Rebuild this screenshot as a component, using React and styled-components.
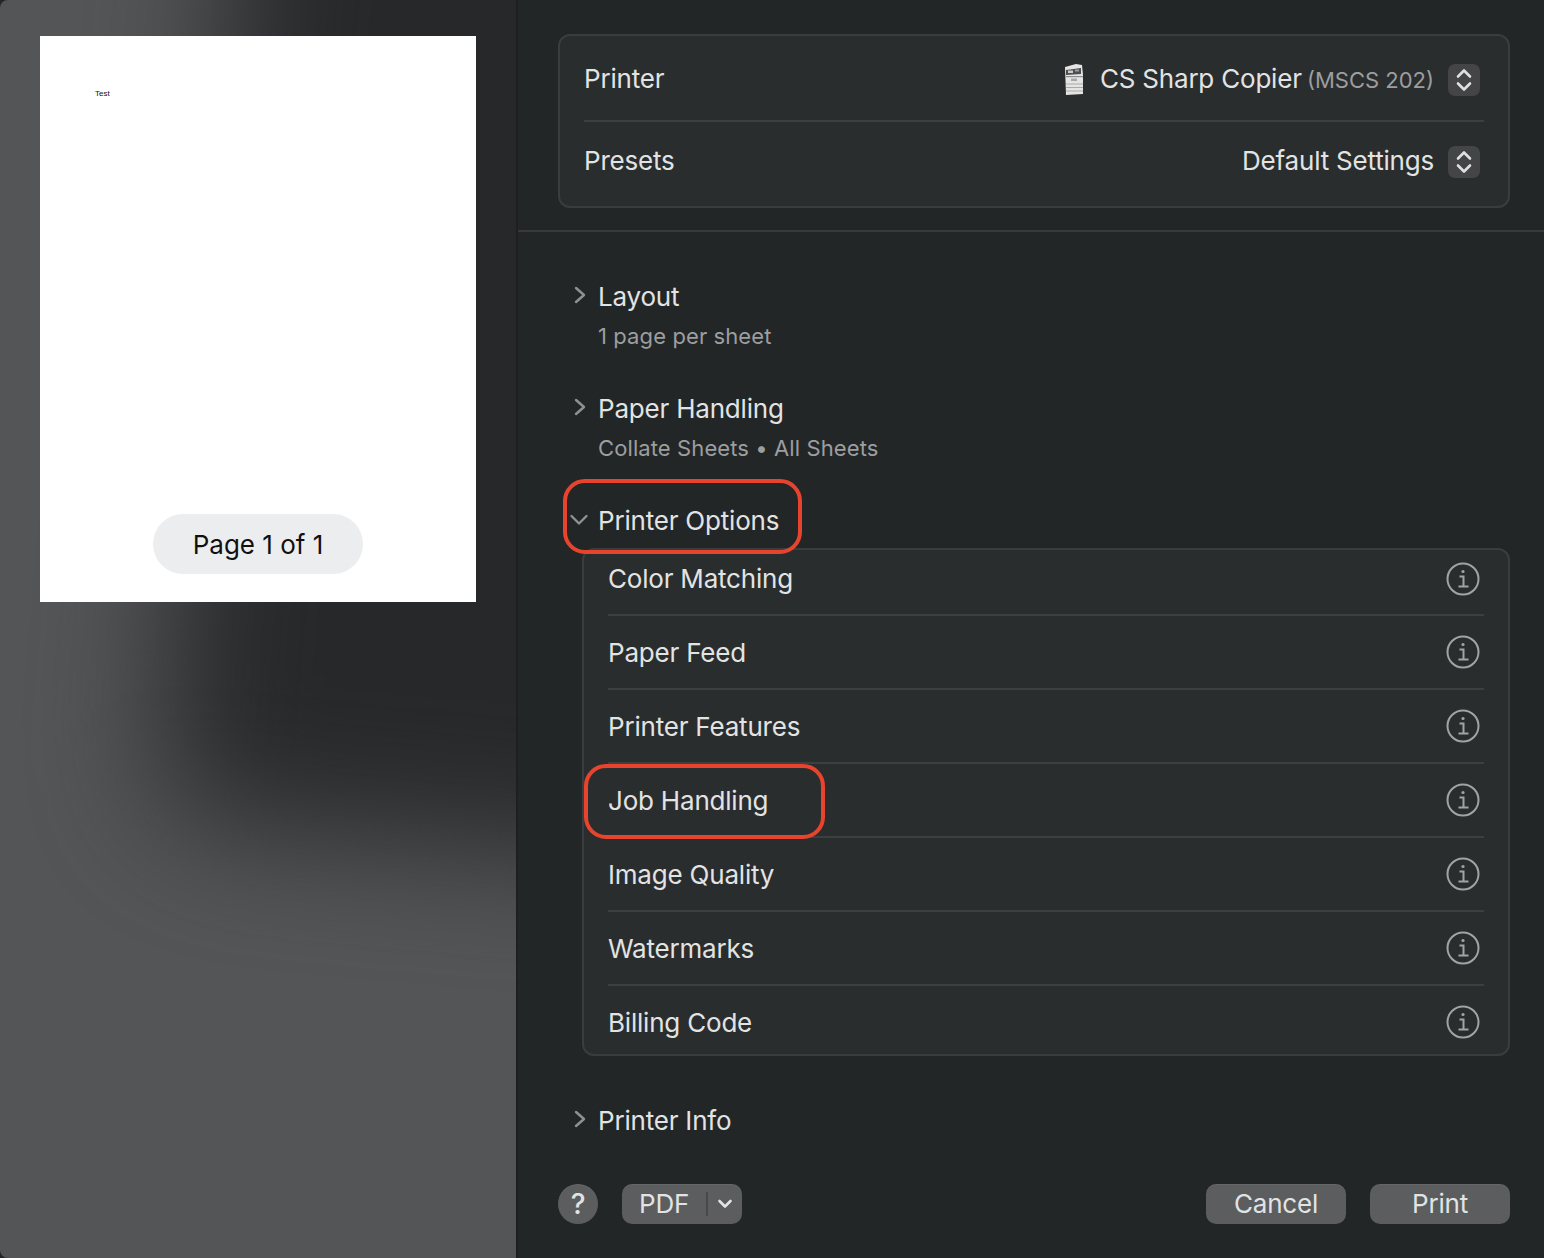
import React from 'react';
import styled, { createGlobalStyle } from 'styled-components';

const Global = createGlobalStyle`
  html, body { margin: 0; padding: 0; background: #232627; }
  body { font-family: Inter, "Liberation Sans", sans-serif; -webkit-font-smoothing: antialiased; }
`;

const Window = styled.div`
  width: 1544px;
  height: 1258px;
  display: flex;
  overflow: hidden;
`;

const Sidebar = styled.aside`
  position: relative;
  width: 516px;
  flex: none;
  box-sizing: border-box;
  padding: 36px 40px 0;
  background: #545557;
  overflow: hidden;
  border-radius: 8px 0 0 8px;
  &::before {
    content: '';
    position: absolute;
    left: 205px;
    top: -300px;
    width: 700px;
    height: 1150px;
    background: #26282a;
    border-radius: 60px;
    filter: blur(65px);
    transform: rotate(5deg);
  }
`;

const Sheet = styled.div`
  position: relative;
  width: 436px;
  height: 566px;
  background: #fff;
  display: flex;
  flex-direction: column;
  align-items: center;
  justify-content: flex-end;
  padding-bottom: 28px;
  box-sizing: border-box;
`;

const SheetText = styled.span`
  position: absolute;
  left: 55px;
  top: 53px;
  font: 8px "Liberation Sans", sans-serif;
  color: #111;
`;

const PagePill = styled.div`
  width: 210px;
  height: 60px;
  border-radius: 30px;
  background: #ecedef;
  color: #111;
  font-size: 26px;
  display: flex;
  align-items: center;
  justify-content: center;
`;

const Main = styled.main`
  flex: 1;
  border-left: 2px solid #1d1f20;
  background: #232627;
  display: flex;
  flex-direction: column;
  color: #e2e3e3;
  font-size: 26px;
  letter-spacing: -0.2px;
`;

const TopArea = styled.div`
  padding: 34px 34px 22px 40px;
  border-bottom: 2px solid #37393b;
`;

const Card = styled.div`
  border: 2px solid #3a3d3f;
  border-radius: 12px;
  background: #2a2d2e;
  box-sizing: border-box;
`;

const PrinterCard = styled(Card)`
  height: 174px;
  padding: 0 24px;
`;

const SetupRow = styled.div`
  height: 84px;
  box-sizing: border-box;
  display: flex;
  align-items: center;
  justify-content: space-between;
  & + & {
    height: 80px;
    padding-bottom: 2px;
    border-top: 2px solid #3d4042;
  }
`;

const SetupValue = styled.div`
  display: flex;
  align-items: center;
`;

const Muted = styled.span`
  color: #9c9e9f;
  font-size: 22px;
  letter-spacing: 0;
  margin-left: -2px;
`;

const Stepper = styled.div`
  width: 32px;
  height: 32px;
  margin: 4px 4px 0 14px;
  border-radius: 7px;
  background: #434547;
  display: flex;
  align-items: center;
  justify-content: center;
`;

const Sections = styled.div`
  flex: 1;
  padding: 44px 34px 0 40px;
  display: flex;
  flex-direction: column;
`;

const Section = styled.div`
  height: 112px;
`;

const Disclosure = styled.div`
  position: relative;
  display: flex;
  align-items: center;
  height: 40px;
  gap: 12px;
  margin-top: ${(p) => p.$gap || 0}px;
`;

const Chevron = styled.svg`
  width: 28px;
  height: 28px;
  flex: none;
  margin-left: 9px;
  margin-right: -9px;
`;

const Subtitle = styled.div`
  margin: 4px 0 0 40px;
  color: #9c9e9f;
  font-size: 22px;
  letter-spacing: 0.1px;
  line-height: 32px;
`;

const Highlight = styled.div`
  position: absolute;
  border: 4px solid #e8432d;
  border-radius: 22px;
  box-sizing: border-box;
  left: ${(p) => p.$left}px;
  top: ${(p) => p.$top}px;
  width: ${(p) => p.$width}px;
  height: 75px;
  pointer-events: none;
`;

const OptionsCard = styled(Card)`
  margin: 8px 0 0 24px;
  height: 508px;
  padding: 0 24px;
`;

const OptionRow = styled.div`
  position: relative;
  height: 74px;
  box-sizing: border-box;
  display: flex;
  align-items: center;
  justify-content: space-between;
  padding-right: 4px;
  border-bottom: 2px solid #3d4042;
  &:first-child {
    height: 66px;
    padding-bottom: 7px;
  }
  &:last-child {
    border-bottom: 0;
    height: 68px;
    padding-top: 4px;
  }
`;

const InfoIcon = styled.svg`
  width: 34px;
  height: 34px;
  flex: none;
`;

const PrinterGlyph = styled.svg`
  width: 20px;
  height: 32px;
  margin: 2px 16px 0 0;
`;

const Footer = styled.div`
  display: flex;
  align-items: center;
  gap: 24px;
  height: 40px;
  margin: 0 34px 34px 40px;
`;

const HelpButton = styled.div`
  width: 40px;
  height: 40px;
  border-radius: 50%;
  background: #5c5d5f;
  display: flex;
  align-items: center;
  justify-content: center;
  font-size: 28px;
  font-weight: 500;
  box-shadow: inset 0 1px 0 rgba(255, 255, 255, 0.06);
`;

const PushButton = styled.div`
  width: ${(p) => p.$width}px;
  height: 40px;
  padding-bottom: 2px;
  border-radius: 10px;
  background: #5c5d5f;
  box-shadow: inset 0 1px 0 rgba(255, 255, 255, 0.06);
  display: flex;
  align-items: center;
  justify-content: center;
  box-sizing: border-box;
`;

const PdfButton = styled(PushButton)`
  justify-content: flex-start;
  padding-left: 17px;
  padding-bottom: 0;
`;

const PdfLabel = styled.span`
  margin-top: -2px;
`;

const PdfDivider = styled.span`
  width: 2px;
  height: 24px;
  background: #474849;
  margin: 0 9px 0 17px;
`;

const Spacer = styled.div`
  flex: 1;
`;

const PrinterIcon = () => (
  <PrinterGlyph viewBox="0 0 20 32">
    <path d="M1 4 L12 1 L18 2 L19 12 L19 31 L2 32 Z" fill="#e4e4e2" />
    <path d="M2 7 L17 5 L17 11 L2 12 Z" fill="#4c4f51" />
    <rect x="4" y="7.5" width="5" height="2.5" fill="#c9caca" />
    <rect x="11" y="6.5" width="4" height="2" fill="#9a9c9d" />
    <rect x="2" y="13" width="17" height="1.2" fill="#8b8d8e" />
    <rect x="7" y="15.5" width="6" height="2.5" fill="#a5a7a8" />
    <path d="M2 21 H19 M2 24.5 H19 M2 28 H19" stroke="#a8aaaa" strokeWidth="1" />
  </PrinterGlyph>
);

const UpDown = () => (
  <svg width="20" height="26" viewBox="0 0 20 26" fill="none" stroke="#dfe0e0" strokeWidth="2.6" strokeLinecap="round" strokeLinejoin="round">
    <path d="M4 9.5 L10 3.5 L16 9.5" />
    <path d="M4 16.5 L10 22.5 L16 16.5" />
  </svg>
);

const Right = () => (
  <Chevron viewBox="0 0 28 28" fill="none" stroke="#8f9192" strokeWidth="2.4" strokeLinecap="round" strokeLinejoin="round">
    <path d="M9 6 L17 13 L9 20" />
  </Chevron>
);

const Down = () => (
  <Chevron viewBox="0 0 28 28" fill="none" stroke="#8f9192" strokeWidth="2.4" strokeLinecap="round" strokeLinejoin="round">
    <path d="M4.5 10 L12 17.5 L19.5 10" />
  </Chevron>
);

const Info = () => (
  <InfoIcon viewBox="0 0 34 34" fill="none" stroke="#a2a4a4" strokeWidth="2">
    <circle cx="17" cy="17" r="15.5" />
    <circle cx="17" cy="9.5" r="1.6" fill="#a2a4a4" stroke="none" />
    <path d="M13.5 14.5 H17.5 V24.5 M12.5 24.5 H22.5" />
  </InfoIcon>
);

const options = ['Color Matching', 'Paper Feed', 'Printer Features', 'Job Handling', 'Image Quality', 'Watermarks', 'Billing Code'];

export default function App() {
  return (
    <Window>
      <Global />
      <Sidebar>
        <Sheet>
          <SheetText>Test</SheetText>
          <PagePill>Page 1 of 1</PagePill>
        </Sheet>
      </Sidebar>
      <Main>
        <TopArea>
          <PrinterCard>
            <SetupRow>
              <span>Printer</span>
              <SetupValue>
                <PrinterIcon />
                <span>CS Sharp Copier <Muted>(MSCS 202)</Muted></span>
                <Stepper><UpDown /></Stepper>
              </SetupValue>
            </SetupRow>
            <SetupRow>
              <span>Presets</span>
              <SetupValue>
                Default Settings
                <Stepper><UpDown /></Stepper>
              </SetupValue>
            </SetupRow>
          </PrinterCard>
        </TopArea>
        <Sections>
          <Section>
            <Disclosure><Right />Layout</Disclosure>
            <Subtitle>1 page per sheet</Subtitle>
          </Section>
          <Section>
            <Disclosure><Right />Paper Handling</Disclosure>
            <Subtitle>Collate Sheets • All Sheets</Subtitle>
          </Section>
          <Disclosure>
            <Down />Printer Options
            <Highlight $left={5} $top={-21} $width={239} />
          </Disclosure>
          <OptionsCard>
            {options.map((name) => (
              <OptionRow key={name}>
                {name}
                <Info />
                {name === 'Job Handling' && <Highlight $left={-24} $top={0} $width={241} />}
              </OptionRow>
            ))}
          </OptionsCard>
          <Disclosure $gap={44}><Right />Printer Info</Disclosure>
        </Sections>
        <Footer>
          <HelpButton>?</HelpButton>
          <PdfButton $width={120}>
            <PdfLabel>PDF</PdfLabel>
            <PdfDivider />
            <svg width="16" height="12" viewBox="0 0 16 12" fill="none" stroke="#e2e3e3" strokeWidth="2.6" strokeLinecap="round" strokeLinejoin="round">
              <path d="M2.5 3 L8 8.5 L13.5 3" />
            </svg>
          </PdfButton>
          <Spacer />
          <PushButton $width={140}>Cancel</PushButton>
          <PushButton $width={140}>Print</PushButton>
        </Footer>
      </Main>
    </Window>
  );
}
